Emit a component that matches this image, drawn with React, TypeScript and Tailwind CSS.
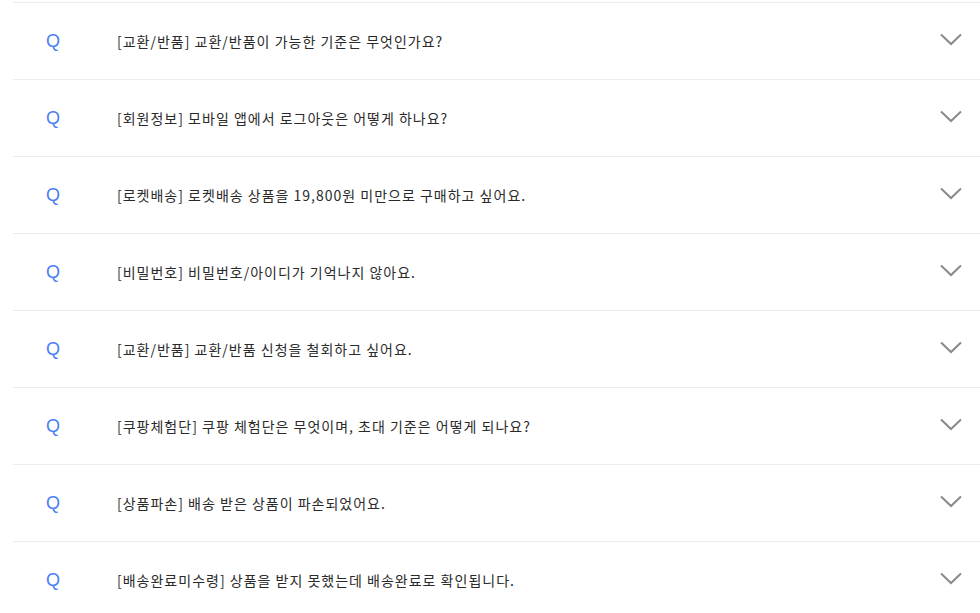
const faqs = [
  "[교환/반품] 교환/반품이 가능한 기준은 무엇인가요?",
  "[회원정보] 모바일 앱에서 로그아웃은 어떻게 하나요?",
  "[로켓배송] 로켓배송 상품을 19,800원 미만으로 구매하고 싶어요.",
  "[비밀번호] 비밀번호/아이디가 기억나지 않아요.",
  "[교환/반품] 교환/반품 신청을 철회하고 싶어요.",
  "[쿠팡체험단] 쿠팡 체험단은 무엇이며, 초대 기준은 어떻게 되나요?",
  "[상품파손] 배송 받은 상품이 파손되었어요.",
  "[배송완료미수령] 상품을 받지 못했는데 배송완료로 확인됩니다.",
]

function Chevron() {
  return (
    <svg width="22" height="13" viewBox="0 0 22 13" fill="none">
      <path d="M1 1.5 L11 11 L21 1.5" stroke="#8a8a8a" strokeWidth="2" />
    </svg>
  )
}

export default function App() {
  return (
    <div className="w-[980px] h-[613px] overflow-hidden bg-white font-['Noto_Sans_CJK_KR',sans-serif]">
      <ul className="mt-[2px] ml-[13px]">
        {faqs.map((q, i) => (
          <li key={i} className="h-[77px] border-t border-[#ececec] flex items-center cursor-pointer">
            <span className="w-[34px] ml-[33px] text-[18px] text-[#4a7df6] font-['Liberation_Sans',sans-serif] leading-none">Q</span>
            <span className="ml-[37px] flex-1 text-[14px] text-[#2a2a2a] tracking-[1px]">{q}</span>
            <span className="mr-[18px] mb-[4px]">
              <Chevron />
            </span>
          </li>
        ))}
      </ul>
    </div>
  )
}
